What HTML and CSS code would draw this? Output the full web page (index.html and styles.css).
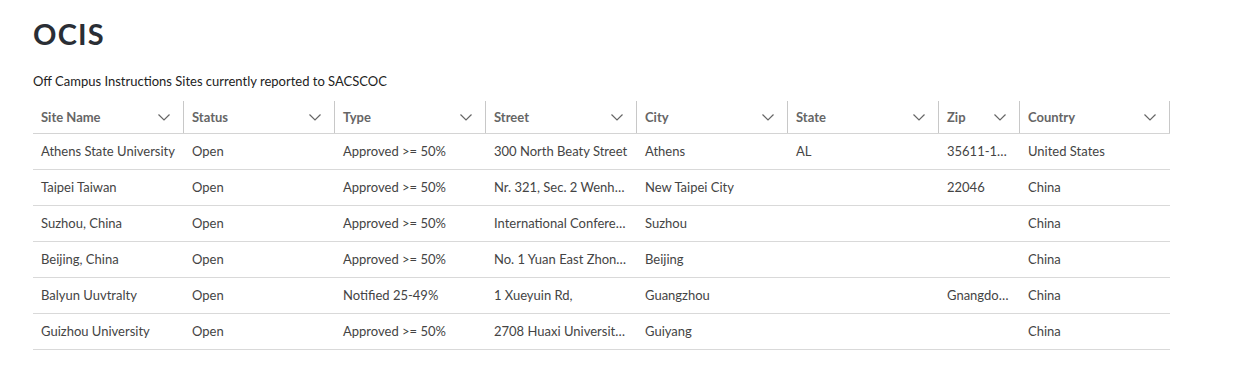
FILE: index.html
```html
<!DOCTYPE html>
<html lang="en">
<head>
<meta charset="utf-8">
<title>OCIS</title>
<link rel="stylesheet" href="styles.css">
</head>
<body>
<main class="page">
  <h1 class="title">OCIS</h1>
  <p class="subtitle">Off Campus Instructions Sites currently reported to SACSCOC</p>
  <table class="grid">
    <colgroup>
      <col class="c-name"><col class="c-status"><col class="c-type"><col class="c-street"><col class="c-city"><col class="c-state"><col class="c-zip"><col class="c-country">
    </colgroup>
    <thead>
      <tr>
        <th><div class="th-in"><span>Site Name</span><svg class="chev" viewBox="0 0 12 7"><path d="M0.5 0.5 L6 6 L11.5 0.5"/></svg></div></th>
        <th><div class="th-in"><span>Status</span><svg class="chev" viewBox="0 0 12 7"><path d="M0.5 0.5 L6 6 L11.5 0.5"/></svg></div></th>
        <th><div class="th-in"><span>Type</span><svg class="chev" viewBox="0 0 12 7"><path d="M0.5 0.5 L6 6 L11.5 0.5"/></svg></div></th>
        <th><div class="th-in"><span>Street</span><svg class="chev" viewBox="0 0 12 7"><path d="M0.5 0.5 L6 6 L11.5 0.5"/></svg></div></th>
        <th><div class="th-in"><span>City</span><svg class="chev" viewBox="0 0 12 7"><path d="M0.5 0.5 L6 6 L11.5 0.5"/></svg></div></th>
        <th><div class="th-in"><span>State</span><svg class="chev" viewBox="0 0 12 7"><path d="M0.5 0.5 L6 6 L11.5 0.5"/></svg></div></th>
        <th><div class="th-in"><span>Zip</span><svg class="chev" viewBox="0 0 12 7"><path d="M0.5 0.5 L6 6 L11.5 0.5"/></svg></div></th>
        <th class="last"><div class="th-in"><span>Country</span><svg class="chev" viewBox="0 0 12 7"><path d="M0.5 0.5 L6 6 L11.5 0.5"/></svg></div></th>
      </tr>
    </thead>
    <tbody>
      <tr><td>Athens State University</td><td>Open</td><td>Approved &gt;= 50%</td><td>300 North Beaty Street</td><td>Athens</td><td>AL</td><td>35611-1902</td><td>United States</td></tr>
      <tr><td>Taipei Taiwan</td><td>Open</td><td>Approved &gt;= 50%</td><td>Nr. 321, Sec. 2 Wenhua Road</td><td>New Taipei City</td><td></td><td>22046</td><td>China</td></tr>
      <tr><td>Suzhou, China</td><td>Open</td><td>Approved &gt;= 50%</td><td>International Conference Center</td><td>Suzhou</td><td></td><td></td><td>China</td></tr>
      <tr><td>Beijing, China</td><td>Open</td><td>Approved &gt;= 50%</td><td>No. 1 Yuan East Zhongguancun</td><td>Beijing</td><td></td><td></td><td>China</td></tr>
      <tr><td>Balyun Uuvtralty</td><td>Open</td><td>Notified 25-49%</td><td>1 Xueyuin Rd,</td><td>Guangzhou</td><td></td><td>Gnangdong</td><td>China</td></tr>
      <tr><td>Guizhou University</td><td>Open</td><td>Approved &gt;= 50%</td><td>2708 Huaxi University Town</td><td>Guiyang</td><td></td><td></td><td>China</td></tr>
    </tbody>
  </table>
</main>
</body>
</html>
```

FILE: styles.css
```css
html, body {
  margin: 0;
  padding: 0;
  background: #ffffff;
}

body {
  font-family: Lato, "Liberation Sans", sans-serif;
  color: #333;
}

.page {
  padding: 15px 0 0 33px;
}

.title {
  margin: 0;
  font-family: Lato, sans-serif;
  font-weight: 700;
  font-size: 29px;
  line-height: 38px;
  letter-spacing: 1.2px;
  color: #2a2e35;
}

.subtitle {
  margin: 20px 0 0 0;
  font-size: 13px;
  line-height: 16px;
  color: #222;
}

.grid {
  margin-top: 11px;
  border-collapse: collapse;
  table-layout: fixed;
  width: 1137px;
  font-size: 13px;
}

.c-name, .c-status, .c-type, .c-street, .c-city, .c-state, .c-country { width: 151px; }
.c-name { width: 150px; }
.c-zip { width: 81px; }

.grid th {
  padding: 0;
  height: 33px;
  text-align: left;
  font-weight: 700;
  color: #666;
  border-bottom: 1px solid #d4d4d4;
  vertical-align: middle;
}

.th-in {
  display: flex;
  align-items: center;
  justify-content: space-between;
  height: 32px;
  margin-top: 1px;
  padding: 0 13px 0 8px;
  border-left: 1px solid #c8c8c8;
}

.grid th:first-child .th-in {
  border-left: none;
}

.grid th.last .th-in {
  border-right: 1px solid #c8c8c8;
  padding-right: 13px;
}

.chev {
  width: 12px;
  height: 7px;
  flex: none;
  fill: none;
  stroke: #666;
  stroke-width: 1.2;
}

.grid td {
  height: 34px;
  padding: 0 8px 1px 9px;
  color: #444;
  white-space: nowrap;
  overflow: hidden;
  text-overflow: ellipsis;
  border-bottom: 1px solid #d9d9d9;
  vertical-align: middle;
}

.grid td:first-child {
  padding-left: 8px;
}
```
